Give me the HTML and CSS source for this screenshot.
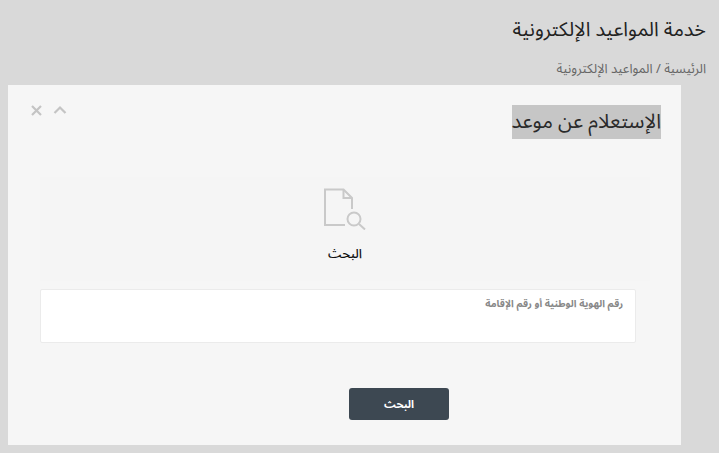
FILE: index.html
```html
<!DOCTYPE html>
<html lang="ar" dir="rtl">
  <head>
    <meta charset="UTF-8" />
    <title>خدمة المواعيد الإلكترونية</title>
    <link rel="stylesheet" href="styles.css">
  </head>
  <body>
    <header class="page-head">
      <h1>خدمة المواعيد الإلكترونية</h1>
      <p class="crumbs">الرئيسية / المواعيد الإلكترونية</p>
    </header>
    <main class="panel">
      <div class="panel-head">
        <h2><span class="selected">الإستعلام عن موعد</span></h2>
        <div class="panel-tools">
          <svg width="14" height="10" viewBox="0 0 14 10" aria-hidden="true"><path d="M1.5 8 L7 2.5 L12.5 8" /></svg>
          <svg width="11" height="11" viewBox="0 0 11 11" aria-hidden="true"><path d="M1 1 L10 10 M10 1 L1 10" /></svg>
        </div>
      </div>
      <section class="search-box">
        <svg class="file-icon" width="42" height="42" viewBox="0 0 42 42" aria-hidden="true">
          <path d="M28 21 V10 L19.5 1.5 H1 V37 H21" />
          <path d="M19.5 1.5 V10 H28" />
          <circle cx="30" cy="31" r="6.5" />
          <path d="M35 36 L41 41.5" />
        </svg>
        <h3>البحث</h3>
      </section>
      <div class="field">
        <label for="hawia">رقم الهوية الوطنية أو رقم الإقامة</label>
        <input id="hawia" type="text" />
      </div>
      <div class="actions">
        <button type="button">البحث</button>
      </div>
    </main>
  </body>
</html>
```

FILE: styles.css
```css
* {
  box-sizing: border-box;
}

body {
  margin: 0;
  padding: 0 13px 8px 38px;
  height: 453px;
  overflow: hidden;
  background-color: #d9d9d9;
  font-family: "Noto Sans Arabic", "Noto Kufi Arabic", "Noto Sans", "DejaVu Sans", sans-serif;
}

.page-head {
  height: 85px;
  padding-top: 17px;
}

h1 {
  margin: 0;
  font-size: 19.8px;
  line-height: 26px;
  font-weight: 400;
  color: #222;
}

.crumbs {
  margin: 17px 0 0;
  font-size: 13px;
  line-height: 18px;
  color: #666;
}

.panel {
  width: 673px;
  height: 360px;
  margin-right: 25px;
  margin-left: -30px;
  padding: 20px 20px 0 23px;
  background-color: #f6f6f6;
}

.panel-head {
  display: flex;
  justify-content: space-between;
  height: 72px;
}

h2 {
  margin: 0;
  font-size: 20.3px;
  font-weight: 400;
  line-height: 34px;
  color: #2a2a2a;
}

.selected {
  display: inline-block;
  background-color: #c6c6c6;
}

.panel-tools {
  display: flex;
  align-items: flex-start;
  gap: 11px;
}

.panel-tools svg {
  fill: none;
  stroke: #c4c4c4;
  stroke-width: 2.2;
}

.search-box {
  height: 104px;
  margin: 0 11px 0 9px;
  padding-top: 11px;
  background-color: #f5f5f5;
  text-align: center;
}

.file-icon {
  display: block;
  margin: 0 auto;
  fill: none;
  stroke: #c9c9c9;
  stroke-width: 2;
}

h3 {
  margin: 14px 0 0;
  font-size: 13px;
  font-weight: 500;
  line-height: 20px;
  color: #111;
}

.field {
  height: 54px;
  margin: 8px 25px 0 9px;
  padding: 6px 12px;
  background-color: #fff;
  border: 1px solid #ebebeb;
  border-radius: 2px;
}

.field label {
  display: block;
  font-size: 10px;
  line-height: 16px;
  font-weight: 700;
  color: #888;
}

.field input {
  width: 100%;
  border: 0;
  outline: 0;
  background: transparent;
}

.actions {
  display: flex;
  justify-content: center;
  margin-top: 45px;
  padding-left: 106px;
}

button {
  width: 100px;
  height: 32px;
  border: 0;
  border-radius: 3px;
  background-color: #3d4852;
  color: #fff;
  font-family: inherit;
  font-size: 11px;
  font-weight: 700;
}
```
